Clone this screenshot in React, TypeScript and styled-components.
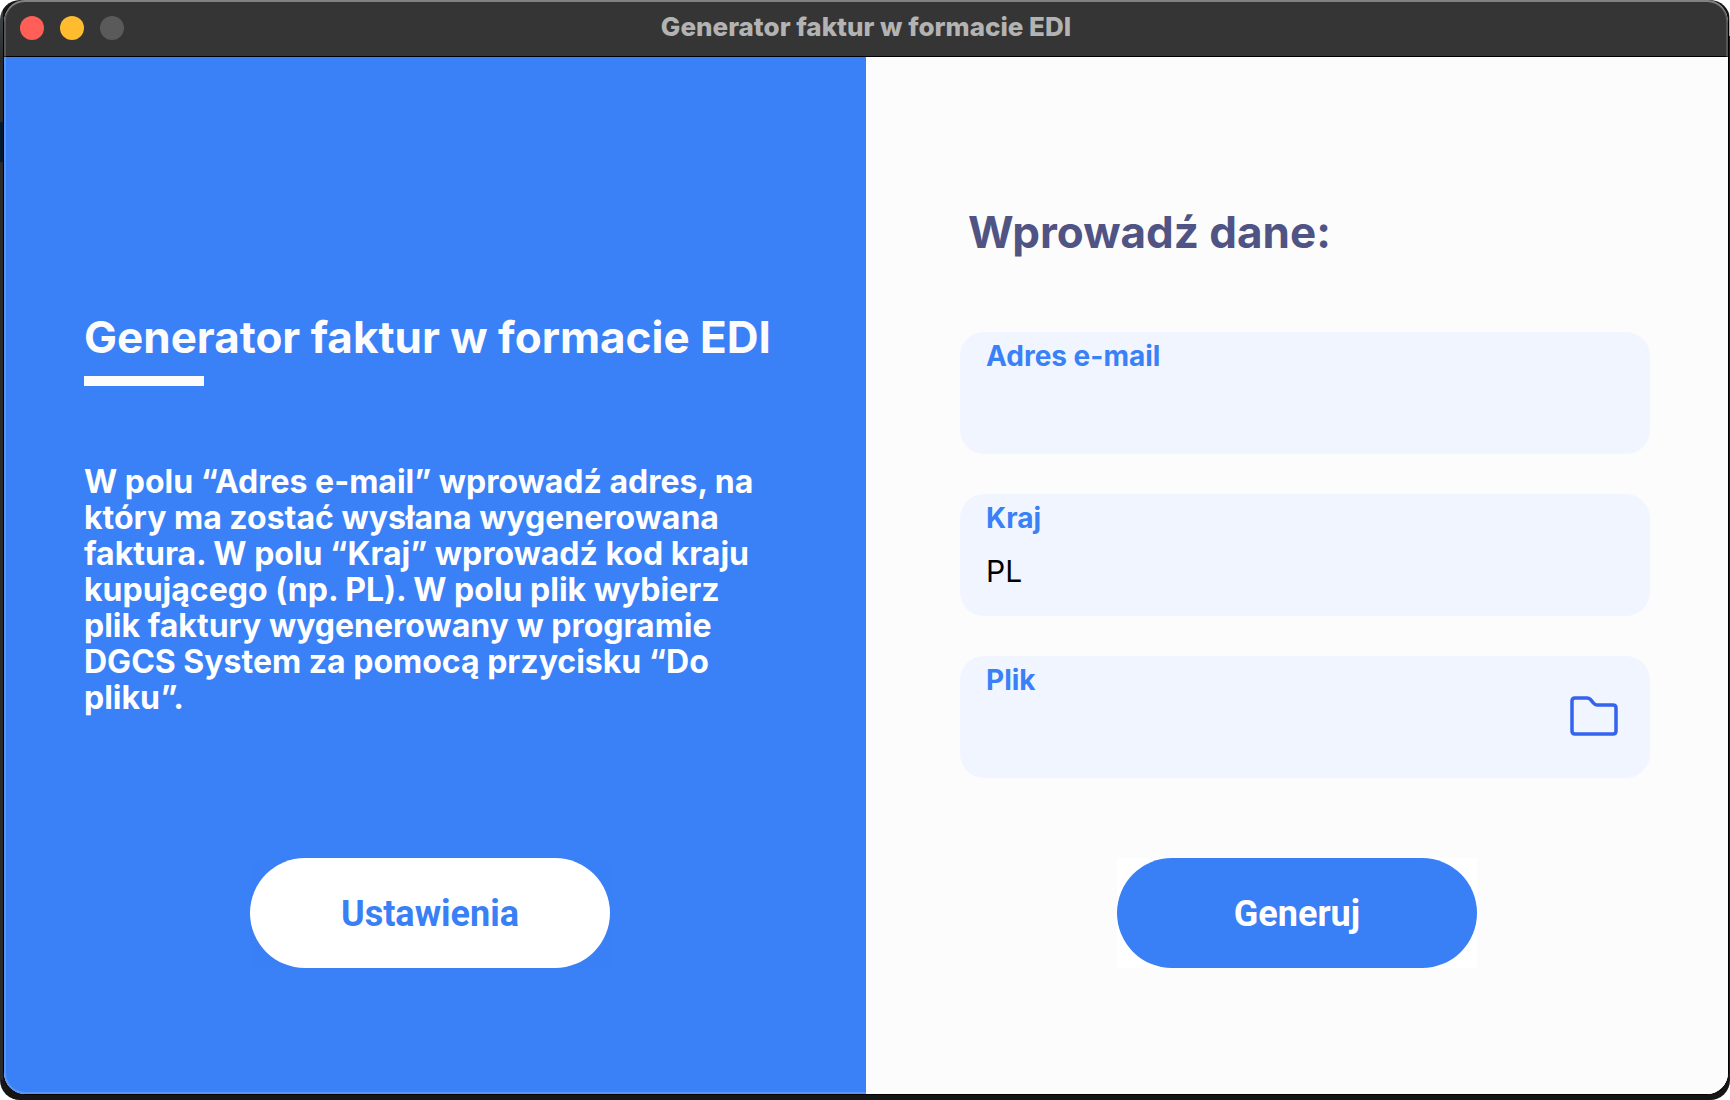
import React, { useState } from "react";
import styled, { createGlobalStyle } from "styled-components";

const GlobalStyle = createGlobalStyle`
  * { box-sizing: border-box; }
  body {
    margin: 0;
    background: #ffffff;
    font-family: Inter, "Liberation Sans", sans-serif;
  }
  h1, h2, p { margin: 0; }
`;

const Desktop = styled.div`
  display: flex;
  min-height: 100vh;
  padding: 0 1px 5px 3px;
  border-radius: 20px;
  background:
    linear-gradient(#3a3f42 0 24px, #2a2a2a 60px 122px, #04192b 122px 162px, #2a2a2a 162px) left top / 3px calc(100% - 20px) no-repeat,
    linear-gradient(#d8b400 0 36px, #1c1c1c 36px) right top / 1px calc(100% - 20px) no-repeat,
    #151515;
`;

const Window = styled.div`
  position: relative;
  flex: 1;
  display: flex;
  flex-direction: column;
  overflow: hidden;
  border: 1px solid #000000;
  border-top: 0;
  border-radius: 22px;
  background: #fcfcfc;

  &::after {
    content: "";
    position: absolute;
    inset: 0;
    border-radius: 21px;
    box-shadow:
      inset 0 2px 0 rgba(255, 255, 255, 0.26),
      inset 0 0 0 2px rgba(255, 255, 255, 0.16);
    pointer-events: none;
  }
`;

const TitleBar = styled.header`
  display: grid;
  grid-template-columns: 1fr auto 1fr;
  align-items: center;
  height: 57px;
  padding: 0 16px;
  border-bottom: 1px solid #000000;
  background: #353535;
`;

const WindowControls = styled.div`
  display: flex;
  gap: 16px;
`;

const ControlDot = styled.button<{ $color: string }>`
  width: 24px;
  height: 24px;
  padding: 0;
  border: 0;
  border-radius: 50%;
  background: ${(p) => p.$color};
`;

const WindowTitle = styled.span`
  padding-bottom: 2px;
  color: #b3b3b3;
  font-size: 26px;
  font-weight: 800;
  line-height: 32px;
`;

const Panels = styled.main`
  flex: 1;
  display: grid;
  grid-template-columns: 1fr 1fr;
`;

const IntroPanel = styled.section`
  display: flex;
  flex-direction: column;
  padding: 252px 90px 40px 80px;
  background: #3a81f7;
  color: #fcfcfc;
`;

const Heading = styled.h1`
  font-size: 44px;
  font-weight: 700;
  line-height: 56px;
  white-space: nowrap;
`;

const Underline = styled.div`
  width: 120px;
  height: 10px;
  margin-top: 11px;
  background: #fcfcfc;
`;

const Description = styled.p`
  max-width: 680px;
  margin-top: 78px;
  color: #ffffff;
  font-size: 32px;
  font-weight: 700;
  line-height: 36px;
`;

const FormPanel = styled.form`
  display: flex;
  flex-direction: column;
  padding: 147px 0 40px;
  background: #fcfcfc;
`;

const FormHeading = styled.h2`
  padding-left: 102px;
  color: #505485;
  font-size: 44px;
  font-weight: 700;
  line-height: 56px;
`;

const Fields = styled.div`
  display: flex;
  flex-direction: column;
  gap: 40px;
  padding: 72px 78px 0 94px;
`;

const Field = styled.div`
  display: grid;
  grid-template-columns: 1fr auto;
  grid-template-rows: 42px 62px;
  height: 122px;
  padding: 8px 32px 10px 26px;
  border-radius: 24px;
  background: #f1f5ff;
`;

const Label = styled.label`
  grid-column: 1;
  color: #3a81f7;
  font-size: 28px;
  font-weight: 700;
  line-height: 32px;
`;

const TextInput = styled.input`
  grid-column: 1;
  grid-row: 2;
  width: 100%;
  padding: 0 0 8px;
  border: 0;
  outline: 0;
  background: transparent;
  color: #000000;
  font-family: inherit;
  font-size: 30px;
`;

const BrowseButton = styled.button`
  grid-column: 2;
  grid-row: 1 / 3;
  align-self: center;
  display: flex;
  padding: 0;
  border: 0;
  background: transparent;
`;

const ButtonFrame = styled.div<{ $color: string; $gap: number }>`
  align-self: center;
  display: flex;
  width: 360px;
  margin-top: ${(p) => p.$gap}px;
  background: ${(p) => p.$color};
`;

const PillButton = styled.button<{ $background: string; $color: string }>`
  flex: 1;
  height: 110px;
  padding: 2px 0 0;
  border: 0;
  border-radius: 55px;
  background: ${(p) => p.$background};
  color: ${(p) => p.$color};
  font-family: Roboto, sans-serif;
  font-size: 36px;
  font-weight: 700;
`;

const FolderIcon = () => (
  <svg width="48" height="40" viewBox="0 0 48 40" fill="none" aria-hidden="true">
    <path
      d="M2 5Q2 2 5 2H17Q19 2 20.500 3.500L23.500 7Q25 9 27 9H43Q46 9 46 12V35Q46 38 43 38H5Q2 38 2 35Z"
      stroke="#3463ee"
      strokeWidth="3.500"
    />
  </svg>
);

export default function App() {
  const [email, setEmail] = useState("");
  const [country, setCountry] = useState("PL");
  const [file, setFile] = useState("");

  return (
    <>
      <GlobalStyle />
      <Desktop>
        <Window>
          <TitleBar>
            <WindowControls>
              <ControlDot type="button" $color="#ff5f57" aria-label="Zamknij" />
              <ControlDot type="button" $color="#febc2e" aria-label="Minimalizuj" />
              <ControlDot type="button" $color="#5a5a5a" aria-label="Maksymalizuj" disabled />
            </WindowControls>
            <WindowTitle>Generator faktur w formacie EDI</WindowTitle>
          </TitleBar>
          <Panels>
            <IntroPanel>
              <Heading>Generator faktur w formacie EDI</Heading>
              <Underline />
              <Description>
                W polu “Adres e-mail” wprowadź adres, na który ma zostać wysłana wygenerowana
                faktura. W polu “Kraj” wprowadź kod kraju kupującego (np. PL). W polu plik wybierz
                plik faktury wygenerowany w programie DGCS System za pomocą przycisku “Do pliku”.
              </Description>
              <ButtonFrame $color="#397ff5" $gap={142}>
                <PillButton type="button" $background="#ffffff" $color="#397ff5">
                  Ustawienia
                </PillButton>
              </ButtonFrame>
            </IntroPanel>
            <FormPanel onSubmit={(e) => e.preventDefault()}>
              <FormHeading>Wprowadź dane:</FormHeading>
              <Fields>
                <Field>
                  <Label htmlFor="email">Adres e-mail</Label>
                  <TextInput id="email" type="email" value={email} onChange={(e) => setEmail(e.target.value)} />
                </Field>
                <Field>
                  <Label htmlFor="country">Kraj</Label>
                  <TextInput id="country" value={country} onChange={(e) => setCountry(e.target.value)} />
                </Field>
                <Field>
                  <Label htmlFor="file">Plik</Label>
                  <TextInput id="file" value={file} onChange={(e) => setFile(e.target.value)} />
                  <BrowseButton type="button" aria-label="Wybierz plik">
                    <FolderIcon />
                  </BrowseButton>
                </Field>
              </Fields>
              <ButtonFrame $color="#ffffff" $gap={80}>
                <PillButton type="submit" $background="#397ff5" $color="#ffffff">
                  Generuj
                </PillButton>
              </ButtonFrame>
            </FormPanel>
          </Panels>
        </Window>
      </Desktop>
    </>
  );
}
